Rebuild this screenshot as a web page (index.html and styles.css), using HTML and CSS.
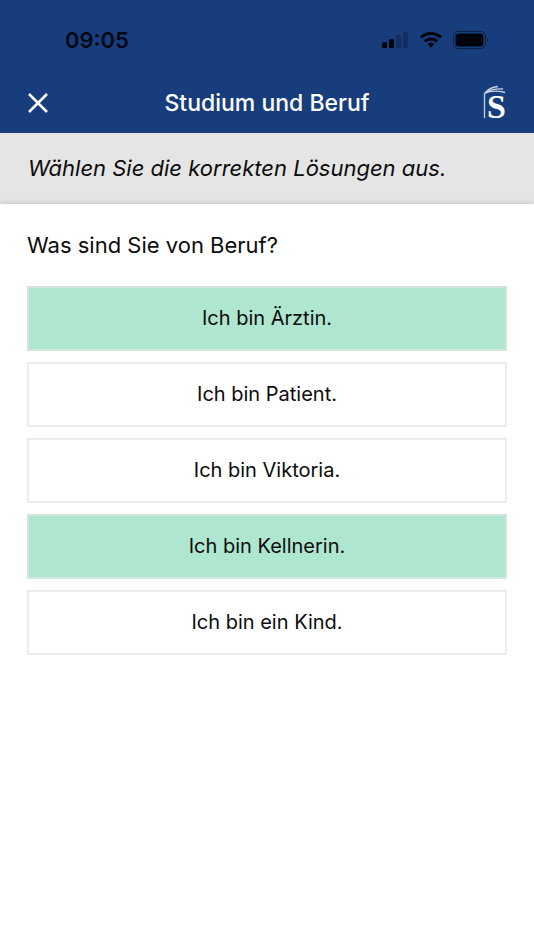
FILE: index.html
```html
<!DOCTYPE html>
<html lang="de">
<head>
  <meta charset="UTF-8">
  <meta name="viewport" content="width=device-width, initial-scale=1.0">
  <title>Studium und Beruf</title>
  <link rel="stylesheet" href="styles.css">
</head>
<body>

  <!-- Status bar and title bar -->
  <header class="header">
    <div class="status">
      <span class="time">09:05</span>
      <div class="status-icons">
        <svg width="28" height="18" viewBox="0 0 28 18" aria-hidden="true">
          <rect x="1" y="11" width="5" height="6" rx="1.500"/>
          <rect x="8" y="8" width="5" height="9" rx="1.500"/>
          <g class="dim">
            <rect x="15" y="4" width="5" height="13" rx="1.500"/>
            <rect x="22" y="1" width="5" height="16" rx="1.500"/>
          </g>
        </svg>
        <svg width="24" height="18" viewBox="0 0 24 18" aria-hidden="true">
          <path d="M12 1C7.700 1 3.900 2.600 1 5.300L3.200 7.600C5.500 5.400 8.600 4.100 12 4.100S18.500 5.400 20.800 7.600L23 5.300C20.100 2.600 16.300 1 12 1Z"/>
          <path d="M12 6.400C9.200 6.400 6.700 7.400 4.800 9.200L7 11.400C8.300 10.200 10.100 9.400 12 9.400S15.700 10.200 17 11.400L19.200 9.200C17.300 7.400 14.800 6.400 12 6.400Z"/>
          <path d="M12 11.700C10.600 11.700 9.400 12.200 8.500 13L12 16.700L15.500 13C14.600 12.200 13.400 11.700 12 11.700Z"/>
        </svg>
        <svg width="36" height="20" viewBox="0 0 36 20" aria-hidden="true">
          <rect class="battery-case" x="0.500" y="1.500" width="32" height="17" rx="5"/>
          <rect x="2.500" y="3.500" width="28" height="13" rx="3.500"/>
          <path class="battery-tip" d="M34 7.500Q36.500 10 34 12.500Z"/>
        </svg>
      </div>
    </div>
    <div class="titlebar">
      <button class="close" type="button" aria-label="Schließen">
        <svg width="22" height="22" viewBox="0 0 22 22" aria-hidden="true">
          <path d="M2 2L20 20M20 2L2 20"/>
        </svg>
      </button>
      <h1>Studium und Beruf</h1>
      <svg class="logo" width="28" height="46" viewBox="0 0 28 46" aria-hidden="true">
        <path d="M5.500 38V13.500Q10 7.500 19 6.500M5.500 13.500Q12 8.500 24 9M5.500 13.500Q14 9.500 26 12.500"/>
        <text x="8" y="38">S</text>
      </svg>
    </div>
  </header>

  <p class="instruction">Wählen Sie die korrekten Lösungen aus.</p>

  <main class="content">
    <fieldset class="answers">
      <legend>Was sind Sie von Beruf?</legend>
      <label class="answer"><input type="checkbox" name="beruf" checked><span>Ich bin Ärztin.</span></label>
      <label class="answer"><input type="checkbox" name="beruf"><span>Ich bin Patient.</span></label>
      <label class="answer"><input type="checkbox" name="beruf"><span>Ich bin Viktoria.</span></label>
      <label class="answer"><input type="checkbox" name="beruf" checked><span>Ich bin Kellnerin.</span></label>
      <label class="answer"><input type="checkbox" name="beruf"><span>Ich bin ein Kind.</span></label>
    </fieldset>
  </main>

</body>
</html>
```
FILE: styles.css
```css
* {
  box-sizing: border-box;
}

body {
  font-family: Inter, "Liberation Sans", sans-serif;
  margin: 0;
  min-height: 100vh;
  background-color: #fff;
  color: #0c0c0c;
}

/* Header */
.header {
  background-color: #183d7c;
  color: #fff;
  padding-top: 24px;
}

.status {
  display: flex;
  justify-content: space-between;
  align-items: center;
  height: 32px;
  padding: 0 45px 0 65px;
  color: #020814;
}

.time {
  font-size: 22px;
  font-weight: 600;
}

.status-icons {
  display: flex;
  align-items: center;
  gap: 10px;
}

.status-icons svg {
  fill: #01040c;
}

.status-icons .dim {
  opacity: 0.25;
}

.status-icons .battery-case {
  fill: none;
  stroke: #01040c;
  stroke-opacity: 0.5;
}

.status-icons .battery-tip {
  fill-opacity: 0.5;
}

.titlebar {
  display: grid;
  grid-template-columns: 28px 1fr 28px;
  align-items: center;
  height: 77px;
  padding: 16px 27px 0;
}

.titlebar h1 {
  margin: 0;
  font-size: 23px;
  line-height: 28px;
  font-weight: 500;
  text-align: center;
}

.close {
  display: flex;
  padding: 0;
  border: none;
  background: none;
  cursor: pointer;
}

.close path {
  fill: none;
  stroke: #fff;
  stroke-width: 2.5;
}

.logo path {
  fill: none;
  stroke: #c5d0e2;
  stroke-width: 1.3;
}

.logo text {
  font-family: "Liberation Serif", serif;
  font-size: 34px;
  font-weight: bold;
  fill: #fff;
}

/* Instruction */
.instruction {
  margin: 0;
  padding: 21px 28px 22px;
  background-color: #e5e5e5;
  font-size: 22px;
  line-height: 28px;
  font-style: italic;
}

/* Question */
.content {
  position: relative;
  padding: 27px 27px 40px;
  background-color: #fff;
  box-shadow: 0 0 6px rgba(0, 0, 0, 0.2);
  clip-path: inset(-8px 0 0 0);
}

.answers {
  display: flex;
  flex-direction: column;
  gap: 11px;
  margin: 0;
  padding: 0;
  border: none;
}

.answers legend {
  padding: 0;
  margin-bottom: 27px;
  font-size: 22px;
  line-height: 28px;
}

.answer {
  position: relative;
  display: block;
  cursor: pointer;
}

.answer input {
  position: absolute;
  inset: 0;
  width: 100%;
  height: 100%;
  margin: 0;
  opacity: 0;
}

.answer span {
  display: block;
  padding: 17px;
  border: 2px solid #ececec;
  font-size: 20px;
  line-height: 27px;
  text-align: center;
}

.answer input:checked + span {
  background-color: #aee6cf;
  border-color: #d3e6de;
}
```
